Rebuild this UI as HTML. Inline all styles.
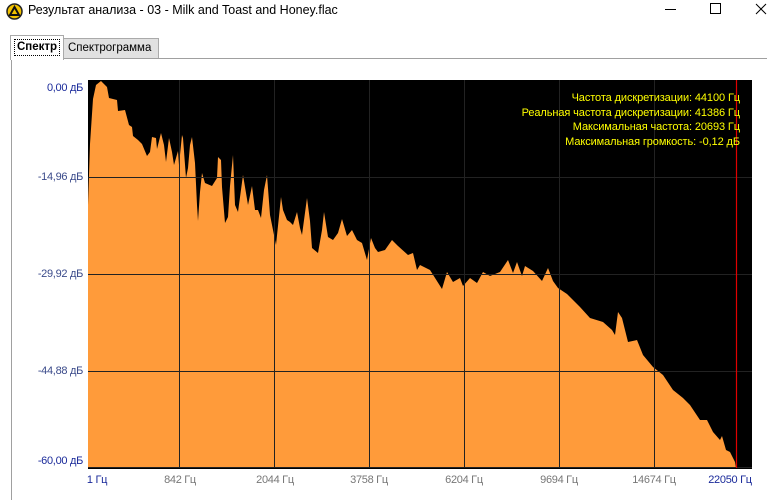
<!DOCTYPE html>
<html><head><meta charset="utf-8"><style>
body{margin:0;width:767px;height:500px;background:#fff;overflow:hidden;position:relative;font-family:"Liberation Sans","DejaVu Sans",sans-serif;}
.a{position:absolute;white-space:nowrap}
.yl{position:absolute;right:684px;font-size:11px;color:#3a4a8a;letter-spacing:-0.3px;white-space:nowrap}
.xl{position:absolute;top:474px;font-size:11px;color:#777;letter-spacing:-0.3px;transform:translateX(-50%);white-space:nowrap}
.info{position:absolute;right:27px;font-size:11px;color:#ffff00;text-align:right;letter-spacing:-0.1px;white-space:nowrap}
</style></head><body>
<svg class="a" style="left:6px;top:3px" width="17" height="17"><circle cx="8.5" cy="8.5" r="7.5" fill="#f2c200" stroke="#222" stroke-width="1.5"/><path d="M8.5 4 L13 12 L4 12 Z" fill="none" stroke="#111" stroke-width="2"/></svg>
<div class="a" style="left:28px;top:3px;font-size:12.5px;color:#000">Результат анализа - 03 - Milk and Toast and Honey.flac</div>
<div class="a" style="left:665px;top:9px;width:11px;height:1px;background:#000"></div>
<div class="a" style="left:710px;top:3px;width:9px;height:9px;border:1px solid #000"></div>
<svg class="a" style="left:755px;top:3px" width="12" height="12"><path d="M1 1L11 11M11 1L1 11" stroke="#000" stroke-width="1"/></svg>
<div class="a" style="left:11px;top:58px;width:760px;height:1px;background:#a0a0a0"></div>
<div class="a" style="left:11px;top:58px;width:1px;height:442px;background:#a0a0a0"></div>
<div class="a" style="left:63px;top:38px;width:94px;height:19px;background:#e1e1e1;border:1px solid #aaa;border-bottom:none"></div>
<div class="a" style="left:68px;top:42px;font-size:11.5px;color:#000">Спектрограмма</div>
<div class="a" style="left:10px;top:35px;width:52px;height:24px;background:#fff;border:1px solid #aaa;border-bottom:none"></div>
<div class="a" style="left:14px;top:39px;width:44px;height:15px;border:1px dotted #000"></div>
<div class="a" style="left:17px;top:41px;font-size:11.5px;font-weight:bold;color:#000">Спектр</div>
<svg class="a" style="left:88px;top:80px" width="664" height="389" viewBox="88 80 664 389">
<rect x="88" y="80" width="664" height="389" fill="#000"/>
<polygon fill="#ff9b3a" points="88,468 88,205 90,144 93,99 96,85 101,81 107,87 109,98 117,100 118,111 125,110 129,125 132,127 133,136 138,140 142,144 147,156 150,152 152,137 156,138 157,149 161,133 164,145 166,162 169,138 172,152 174,165 178,151 179,165 182,135 183,138 186,178 188,168 190,145 192,137 195,163 197,205 198,221 200,192 202,173 205,183 212,186 217,178 218,157 221,160 222,187 225,223 228,217 230,186 233,155 235,205 238,212 243,175 247,199 248,205 252,186 255,210 258,210 261,218 264,190 267,175 270,215 273,230 276,245 281,197 283,210 287,220 290,222 293,225 297,212 300,228 302,235 307,198 310,221 312,248 318,253 322,230 324,212 328,237 333,240 338,233 342,219 347,236 352,230 357,240 362,243 367,260 371,238 375,248 378,252 385,250 392,240 398,246 408,255 413,253 417,270 420,265 430,270 442,289 447,272 453,282 460,278 463,286 470,278 477,283 483,272 490,276 500,272 508,260 513,273 517,262 522,276 525,266 533,271 542,281 548,268 553,281 558,288 567,294 580,307 590,318 603,322 612,330 615,335 618,312 622,318 628,342 637,340 643,355 653,367 663,375 673,390 683,398 690,405 700,420 707,420 713,432 720,440 722,436 726,450 730,452 735,462 736,468"/>
<g stroke="#222" stroke-width="1"><line x1="179.5" y1="80" x2="179.5" y2="468"/><line x1="274.5" y1="80" x2="274.5" y2="468"/><line x1="369.5" y1="80" x2="369.5" y2="468"/><line x1="464.5" y1="80" x2="464.5" y2="468"/><line x1="559.5" y1="80" x2="559.5" y2="468"/><line x1="654.5" y1="80" x2="654.5" y2="468"/><line x1="88" y1="177.5" x2="752" y2="177.5"/><line x1="88" y1="274.5" x2="752" y2="274.5"/><line x1="88" y1="371.5" x2="752" y2="371.5"/><line x1="88" y1="467.5" x2="752" y2="467.5"/></g>
<line x1="736.5" y1="80" x2="736.5" y2="468" stroke="#e00000" stroke-width="1.2"/>
</svg>
<div class="info" style="top:92px">Частота дискретизации: 44100 Гц</div>
<div class="info" style="top:107px">Реальная частота дискретизации: 41386 Гц</div>
<div class="info" style="top:121px">Максимальная частота: 20693 Гц</div>
<div class="info" style="top:136px">Максимальная громкость: -0,12 дБ</div>
<div class="yl" style="top:82px;color:#1a2a9a">0,00 дБ</div>
<div class="yl" style="top:171px">-14,96 дБ</div>
<div class="yl" style="top:268px">-29,92 дБ</div>
<div class="yl" style="top:365px">-44,88 дБ</div>
<div class="yl" style="top:455px;color:#1a2a9a">-60,00 дБ</div>
<div class="xl" style="left:97px;color:#1a2a9a">1 Гц</div>
<div class="xl" style="left:180px">842 Гц</div>
<div class="xl" style="left:275px">2044 Гц</div>
<div class="xl" style="left:369px">3758 Гц</div>
<div class="xl" style="left:464px">6204 Гц</div>
<div class="xl" style="left:559px">9694 Гц</div>
<div class="xl" style="left:654px">14674 Гц</div>
<div class="xl" style="left:730px;color:#1a2a9a">22050 Гц</div>
</body></html>
